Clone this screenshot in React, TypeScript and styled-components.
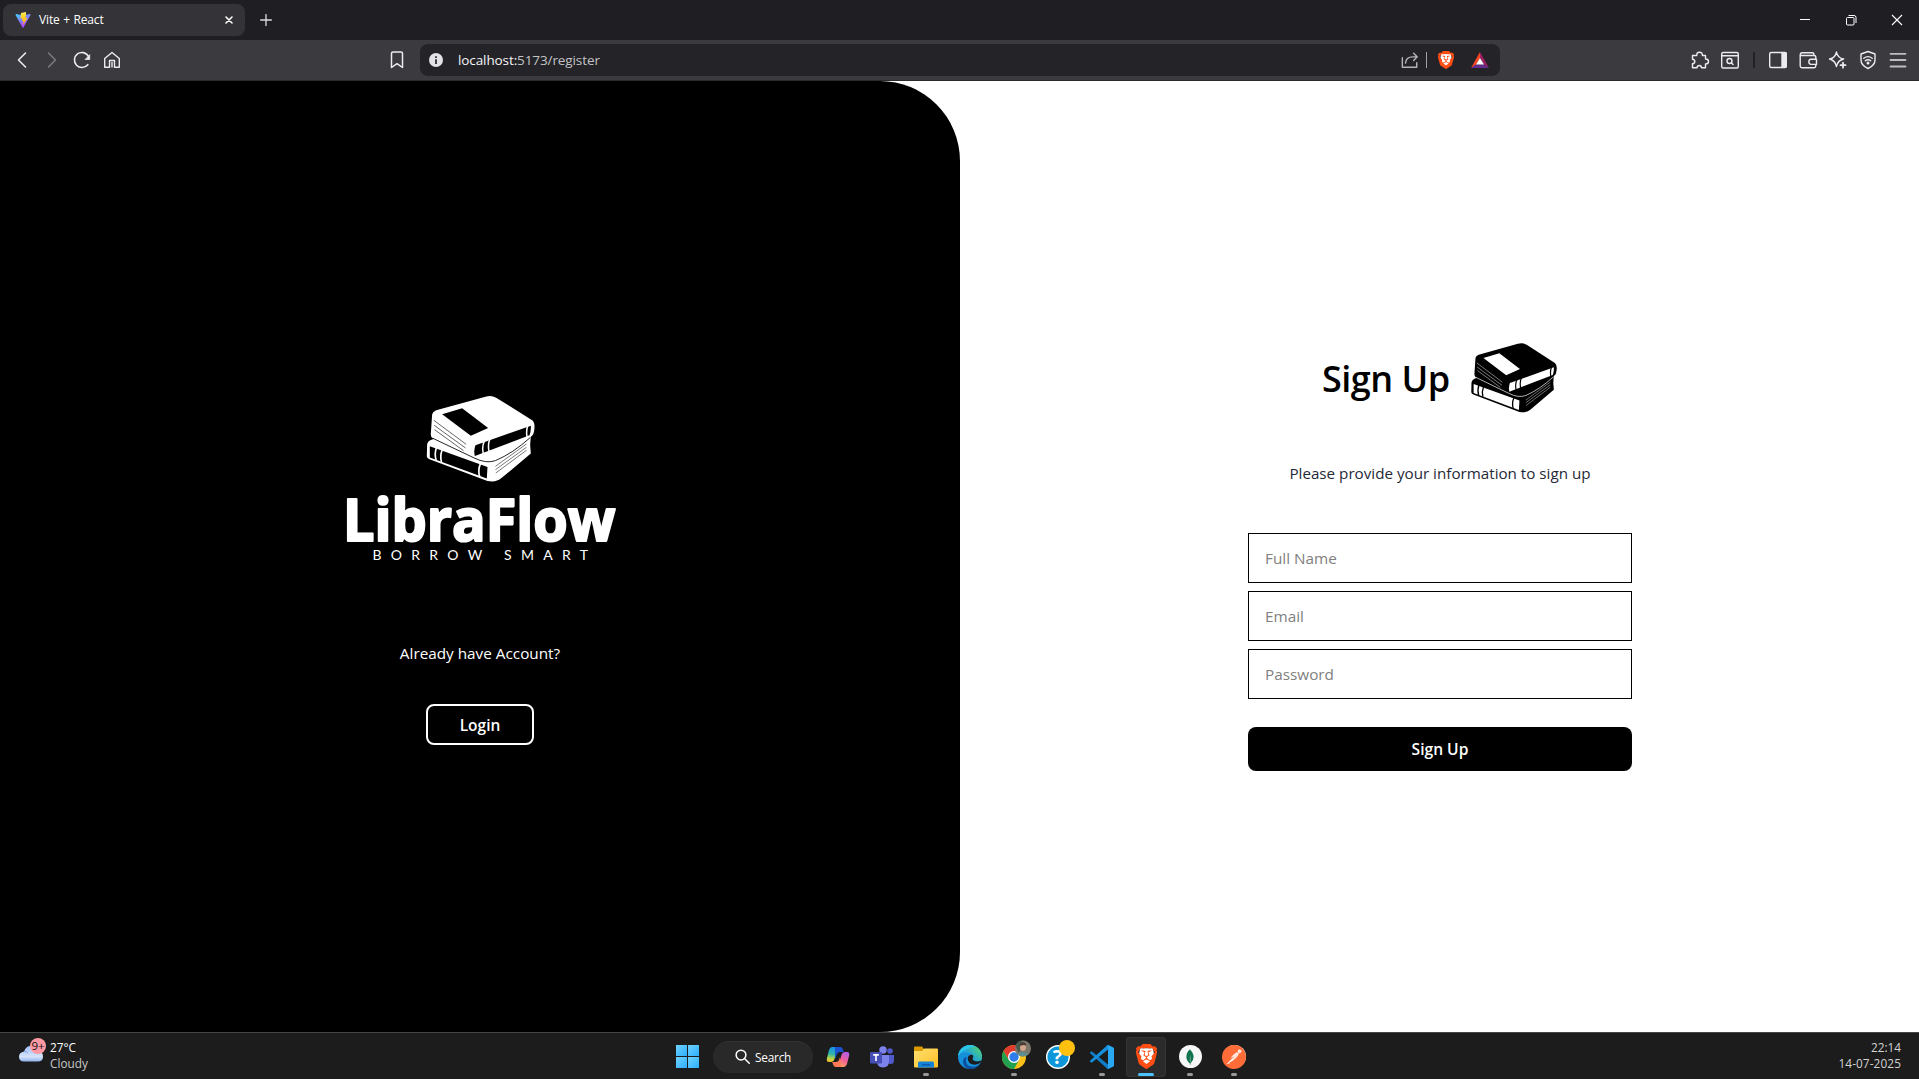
import React from 'react';
import styled, { createGlobalStyle } from 'styled-components';
import { SiBrave, SiMongodb, SiPostman } from 'react-icons/si';

const Global = createGlobalStyle`
  * { box-sizing: border-box; }
  html, body { margin: 0; padding: 0; overflow: hidden; }
  body { font-family: "Open Sans", "Noto Sans", sans-serif; background: #fff; }
  svg { display: block; flex: none; }
`;

const Screen = styled.div`
  display: flex;
  flex-direction: column;
  width: 1919px;
  height: 1079px;
`;

/* ---------- browser chrome ---------- */

const TabStrip = styled.header`
  display: flex;
  align-items: center;
  height: 40px;
  padding-left: 3px;
  background: #1f1e23;
  color: #fff;
`;

const Tab = styled.div`
  display: flex;
  align-items: center;
  width: 242px;
  height: 32px;
  padding: 0 10px 0 12px;
  border-radius: 8px;
  background: #343338;
`;

const TabTitle = styled.span`
  flex: 1;
  margin-left: 8px;
  font-size: 12px;
  font-weight: 500;
  letter-spacing: -0.15px;
  word-spacing: 0.6px;
  line-height: 16px;
`;

const NewTab = styled.div`
  margin-left: 15px;
`;

const WindowControls = styled.div`
  display: flex;
  align-items: center;
  gap: 34px;
  margin-left: auto;
  padding-right: 16px;
`;

const Toolbar = styled.nav`
  display: flex;
  align-items: center;
  height: 41px;
  padding: 0 11px 0 12px;
  border-bottom: 1px solid #2b2a2f;
  background: #3b3a3f;
  color: #ececef;
`;

const IconGroup = styled.div<{ $push?: string }>`
  display: flex;
  align-items: center;
  gap: 10px;
  margin-left: ${(p) => p.$push || '0'};
`;

const AddressBar = styled.div`
  display: flex;
  align-items: center;
  width: 1080px;
  height: 32px;
  margin-left: 13px;
  padding: 0 11px 0 8px;
  border-radius: 8px;
  background: #242328;
`;

const Url = styled.span`
  flex: 1;
  margin-left: 14px;
  font-size: 13.5px;
  letter-spacing: -0.1px;
  color: #c3c3c7;
  b { font-weight: 400; color: #f5f5f7; }
`;

const Divider = styled.i<{ $color: string; $margin: string; $w: number }>`
  width: ${(p) => p.$w}px;
  height: 16px;
  margin: ${(p) => p.$margin};
  background: ${(p) => p.$color};
`;

/* ---------- page ---------- */

const Page = styled.main`
  display: flex;
  height: 951px;
  background: #fff;
`;

const BrandPanel = styled.section`
  display: flex;
  flex-direction: column;
  align-items: center;
  width: 960px;
  padding-top: 310px;
  border-radius: 0 80px 80px 0;
  background: #000;
  color: #fff;
`;

const Prompt = styled.p`
  margin: 70px 0 0;
  font-size: 15.3px;
  line-height: 24px;
  letter-spacing: 0;
`;

const LoginButton = styled.button`
  width: 108px;
  height: 41px;
  margin-top: 39px;
  padding: 0;
  border: 2px solid #fff;
  border-radius: 8px;
  background: #000;
  color: #fff;
  font: 600 15.5px/24px "Open Sans", sans-serif;
`;

const FormPanel = styled.section`
  display: flex;
  flex: 1;
  flex-direction: column;
  align-items: center;
  padding: 262px 0 0 1px;
`;

const Heading = styled.div`
  display: flex;
  align-items: center;
  gap: 21px;
  height: 70px;
  width: 234px;
  h1 {
    width: 128px;
    margin: 2px 0 0 -1px;
    font-size: 36px;
    font-weight: 600;
    line-height: 40px;
    letter-spacing: -0.5px;
    white-space: nowrap;
    color: #000;
  }
`;

const Hint = styled.p`
  margin: 48px 0;
  font-size: 15.2px;
  line-height: 24px;
  color: #1f2937;
`;

const Form = styled.form`
  display: flex;
  flex-direction: column;
  gap: 8px;
  width: 384px;
`;

const Field = styled.input`
  height: 50px;
  padding: 0 16px;
  border: 1px solid #000;
  border-radius: 0;
  outline: none;
  background: #fff;
  font: 400 15.3px/24px "Open Sans", sans-serif;
  &::placeholder { color: #808080; opacity: 1; }
`;

const Submit = styled.button`
  height: 44px;
  margin-top: 20px;
  border: 0;
  border-radius: 8px;
  background: #000;
  color: #fff;
  font: 600 15.6px/24px "Open Sans", sans-serif;
`;

/* ---------- taskbar ---------- */

const Taskbar = styled.footer`
  display: grid;
  grid-template-columns: 1fr auto 1fr;
  height: 47px;
  border-top: 1px solid #454545;
  background: #1c1c1c;
  color: #fff;
  font-size: 11.8px;
  line-height: 16px;
`;

const Weather = styled.div`
  display: flex;
  gap: 6px;
  padding: 7px 0 0 18px;
  div { margin-top: -1px; }
  p { margin: 0; }
  p + p { color: #c8c8c8; }
`;

const Apps = styled.div`
  display: flex;
  align-items: center;
  padding: 1px 0 0 13px;
`;

const StartButton = styled.div`
  display: grid;
  grid-template: 11px 11px / 11px 11px;
  gap: 1px;
  margin-right: 14px;
  i { background: linear-gradient(135deg, #6fd2ff, #2daeff); }
`;

const SearchPill = styled.div`
  display: flex;
  align-items: center;
  gap: 5px;
  width: 100px;
  height: 32px;
  margin-right: 3px;
  padding: 0 0 1px 22px;
  border-radius: 16px;
  border-top: 1px solid #343434;
  background: #292929;
  letter-spacing: -0.2px;
`;

const AppSlot = styled.div<{ $active?: boolean }>`
  position: relative;
  display: flex;
  align-items: center;
  justify-content: center;
  width: 40px;
  height: 40px;
  margin: 0 2px;
  border-radius: 4px;
  background: ${(p) => (p.$active ? '#2b2b2b' : 'transparent')};
  box-shadow: ${(p) => (p.$active ? 'inset 0 0 0 1px #343434' : 'none')};
`;

const Indicator = styled.i<{ $active?: boolean }>`
  position: absolute;
  bottom: 1px;
  left: 50%;
  width: ${(p) => (p.$active ? 16 : 6)}px;
  height: 3px;
  border-radius: 2px;
  background: ${(p) => (p.$active ? '#4cc2ff' : '#9a9a9a')};
  transform: translateX(-50%);
`;

const Clock = styled.div`
  padding: 6px 18px 0 0;
  text-align: right;
  color: #d2d2d2;
  p { margin: 0; }
  p + p { letter-spacing: 0.1px; }
`;

const Disc = styled.span<{ $bg: string }>`
  display: flex;
  align-items: center;
  justify-content: center;
  width: 23px;
  height: 23px;
  border-radius: 50%;
  background: ${(p) => p.$bg};
`;

/* ---------- drawings ---------- */

const Line = ({ children, size = 20, w = 1.4, color = 'currentColor' }: { children: React.ReactNode; size?: number; w?: number; color?: string }) => (
  <svg width={size} height={size} viewBox="0 0 20 20" fill="none" stroke={color} strokeWidth={w} strokeLinecap="round" strokeLinejoin="round">
    {children}
  </svg>
);

const Books = ({ fg, bg }: { fg: string; bg: string }) => (
  <g>
    <path fill={fg} d="M322 258 323 222Q325 212 336 208L348 204 470 250 634 196 632 224 634 250 544 325Q530 337 504 332L330 267Q322 264 322 258Z" />
    <path fill={bg} d="M331 228 504 290 502 325 331 262Z" />
    <path fill="none" stroke={fg} strokeWidth="5" d="M351 232Q344 250 350 270M368 239Q361 256 366 275M483 280Q474 300 481 320" />
    <path fill="none" stroke={bg} strokeWidth="1.6" d="M528 288 621 221M528 298 621 231M529 308 621 240" />
    <path fill={fg} d="M334 190 338 132Q340 124 350 120L498 79Q516 74 530 82L638 150Q646 156 645 172 644 194 634 199L470 258Q460 262 448 253L340 204Q333 200 334 190Z" />
    <path fill="none" stroke={bg} strokeWidth="2.6" d="M340 204 464 263Q500 281 528 271 580 249 632 202" />
    <path fill={bg} d="M368 132 428 114 506 173 454 196Z" />
    <path fill={bg} d="M468 225 634 166Q635 182 630 195L466 257Q462 240 468 225Z" />
    <path fill="none" stroke={fg} strokeWidth="4.5" d="M495 211Q486 230 492 251M511 206Q504 225 509 245M625 166Q619 182 623 201" />
    <path fill="none" stroke={bg} strokeWidth="1.8" d="M343 150 440 222M344 165 438 233M345 178 432 241" />
  </g>
);

const BrandLogo = () => (
  <svg width="320" height="180" viewBox="-20 0 320 180" style={{ overflow: 'visible' }}>
    <g transform="translate(-20.5 -20.7) scale(.3333)">
      <Books fg="#fff" bg="#000" />
    </g>
    <text x="3" y="149.500" fill="#fff" stroke="#fff" strokeWidth="2.200" strokeLinejoin="round" fontFamily="Open Sans" fontWeight="700" fontSize="58.500" textLength="272.500" lengthAdjust="spacingAndGlyphs">LibraFlow</text>
    <text x="32.500" y="168.800" fill="#fff" fontFamily="Lato" fontSize="14" textLength="215.500" lengthAdjust="spacing">BORROW SMART</text>
  </svg>
);

const BraveMark = ({ w, h }: { w: number; h: number }) => (
  <svg width={w} height={h} viewBox="2 0 20 24" preserveAspectRatio="none">
    <path d="M6 4 18 4 19 9 16 18 12 21 8 18 5 9Z" fill="#fff" />
    <SiBrave x="0" y="0" size={24} color="#ff4d14" />
  </svg>
);

const Vite = () => (
  <svg width="16" height="16" viewBox="0 0 32 32">
    <defs>
      <linearGradient id="va" x1="0" y1="0" x2=".6" y2="1"><stop stopColor="#41d1ff" /><stop offset="1" stopColor="#bd34fe" /></linearGradient>
      <linearGradient id="vb" x1="0" y1="0" x2="0" y2="1"><stop stopColor="#ffea83" /><stop offset=".2" stopColor="#ffdd35" /><stop offset="1" stopColor="#ffa800" /></linearGradient>
    </defs>
    <path fill="url(#va)" d="M31 6 17 31Q16 32 15 31L1 6Q1 4 3 4L16 7 29 4Q32 4 31 6Z" />
    <path fill="url(#vb)" d="M22 0 12 2 11 13 15 13 14 18 17 18 16 26 25 12 21 12 22 6Z" />
  </svg>
);

const Bat = () => (
  <svg width="18" height="16" viewBox="0 0 18 16">
    <path fill="#ff4724" d="M9 0 0 16 5 12.5 9 6Z" />
    <path fill="#9e1f63" d="M9 0 18 16 13 12.5 9 6Z" />
    <path fill="#662d91" d="M0 16 5 12.5H13L18 16Z" />
    <path fill="#fff" d="M9 6 13 12.5H5Z" />
  </svg>
);

const Cloud = () => (
  <svg width="26" height="24" viewBox="0 0 26 24" style={{ overflow: 'visible' }}>
    <defs><linearGradient id="cl" x1="0" y1="0" x2="0" y2="1"><stop stopColor="#9fc0f5" /><stop offset=".7" stopColor="#d5e3fa" /><stop offset="1" stopColor="#8fb2ef" /></linearGradient></defs>
    <path fill="url(#cl)" d="M6 21.500Q1 21.500 1 16.500 1 12.500 6 11.500 8 5.500 14 5.500 20 5.500 21 11 25 12 25 16.500 25 21.500 20 21.500Z" />
    <path fill="none" stroke="#7fa6ea" d="M6 11.500Q9 11.500 10 13" />
    <circle cx="20" cy="6" r="8" fill="#ff99a4" />
    <text x="20" y="10.200" textAnchor="middle" fontSize="11.500" fill="#111">9+</text>
  </svg>
);

const Copilot = () => (
  <svg width="24" height="22" viewBox="0 0 24 22">
    <defs>
      <linearGradient id="ca" x1=".3" y1="0" x2=".2" y2="1"><stop stopColor="#1b8fe8" /><stop offset=".45" stopColor="#2fb5a6" /><stop offset=".8" stopColor="#c8d63b" /><stop offset="1" stopColor="#f5b52e" /></linearGradient>
      <linearGradient id="cb" x1=".7" y1="0" x2=".3" y2="1"><stop stopColor="#b45be8" /><stop offset=".5" stopColor="#f0609a" /><stop offset="1" stopColor="#ffa45c" /></linearGradient>
    </defs>
    <path fill="url(#ca)" d="M6 1H14Q12 2 11 5L8.500 13Q7.500 16 5 16H3Q0 16 1 12L3 4Q4 1 6 1Z" />
    <path fill="#1a52cf" d="M9 1H14Q16.500 1 17 4L17.800 6H14Q12 6 11 8L9 13Z" />
    <path fill="url(#cb)" d="M18 21H10Q12 20 13 17L15.500 9Q16.500 6 19 6H21Q24 6 23 10L21 18Q20 21 18 21Z" />
    <path fill="#ff7a55" d="M15 21H10Q7.500 21 7 18L6.200 16H10Q12 16 13 14L14 11Z" />
  </svg>
);

const Teams = () => (
  <svg width="24" height="22" viewBox="0 0 24 22">
    <circle cx="20" cy="5" r="2.800" fill="#5059c9" />
    <circle cx="13" cy="4" r="3.700" fill="#7b83eb" />
    <path fill="#5059c9" d="M17 9H24V14.500Q24 18 20.500 18 17 18 17 15Z" />
    <path fill="#7b83eb" d="M7 9H19V15Q19 21.500 13 21.500 7 21.500 7 15Z" />
    <rect x="0" y="6" width="12" height="11.500" rx="1.200" fill="#464eb8" />
    <path stroke="#fff" strokeWidth="1.600" d="M3.200 8.900H8.800M6 9V15" />
  </svg>
);

const Folder = () => (
  <svg width="24" height="22" viewBox="0 0 24 22">
    <defs><linearGradient id="fo" x1="0" y1="0" x2="1" y2="1"><stop stopColor="#ffdf72" /><stop offset="1" stopColor="#ffc022" /></linearGradient></defs>
    <path fill="#dd9a00" d="M0 1.500Q0 .5 1 .5H8L10 3V8H0Z" />
    <path fill="url(#fo)" d="M0 5H8L10.500 2.500H23Q24 2.500 24 3.500V20.500Q24 21.500 23 21.500H1Q0 21.500 0 20.500Z" />
    <path fill="#1483d8" d="M4 21.500V17Q4 15.500 5.500 15.500H18.500Q20 15.500 20 17V21.500Z" />
    <path fill="#0b5cad" d="M8 18H16V19.500H8Z" />
  </svg>
);

const Edge = () => (
  <svg width="24" height="24" viewBox="0 0 24 24">
    <defs><linearGradient id="ed" x1="0" y1="24" x2="24" y2="0" gradientUnits="userSpaceOnUse"><stop stopColor="#0b59a8" /><stop offset=".5" stopColor="#1c9ee0" /><stop offset="1" stopColor="#5fe05c" /></linearGradient></defs>
    <circle cx="12" cy="12" r="12" fill="#1790dc" />
    <path fill="url(#ed)" d="M0 12A12 12 0 0 1 24 12Q24 16.500 19.500 16.500 14.500 16.500 14.500 14 16 12 14.500 10 12 7 7 8 2 9 0 12Z" />
    <path fill="#2cc5e8" d="M0 11.500A12 12 0 0 1 18 1.600Q12 2 5.500 6 1 9 0 11.500Z" />
    <path fill="#0c4f9e" d="M8.500 12Q6 21 15 21.800 19 22 22 18.500 18 25 10.500 23.900 5 22 5 16.500 5.500 12 8.500 12Z" />
    <path fill="#1c1c1c" d="M14.500 9.700Q9.500 9.500 9.700 14 10.500 19.500 16.500 19.700 20.500 19.700 23 17 24 15.500 22 15.800 19.500 17 16.500 16 14 15 14.700 13.500 16.200 11.500 14.500 9.700Z" />
  </svg>
);

const Chrome = () => (
  <svg width="24" height="32" viewBox="0 0 24 32" style={{ overflow: 'visible' }}>
    <circle cx="12" cy="16" r="12" fill="#fbc116" />
    <path fill="#e33b2e" d="M1.600 10A12 12 0 0 1 22.400 10H12V16L6.800 19Z" />
    <path fill="#1fa150" d="M1.600 10A12 12 0 0 0 12 28L17.200 19 12 16 6.800 19Z" />
    <circle cx="12" cy="16" r="6" fill="#fff" />
    <circle cx="12" cy="16" r="4.700" fill="#2f7de9" />
    <circle cx="21" cy="7.500" r="8" fill="#7b776a" />
    <path fill="#48594f" d="M13.500 5A8 8 0 0 1 20 -.4L17 12Z" />
    <path fill="#5d8e91" d="M15 13Q20 9 26.500 13 21 18 15 13Z" />
    <ellipse cx="21" cy="6" rx="3" ry="4" fill="#d3a58a" />
    <path fill="#493b33" d="M18 5Q17.500 1 21 1.200 24.500 1 24 5 22.500 3 18 5Z" />
  </svg>
);

const Help = () => (
  <svg width="24" height="32" viewBox="0 0 24 32" style={{ overflow: 'visible' }}>
    <circle cx="12" cy="16" r="11.300" fill="#0d96d8" stroke="#fff" strokeWidth="1.400" />
    <text x="11.500" y="23.300" textAnchor="middle" fontSize="20" fontWeight="700" fill="#fff">?</text>
    <circle cx="21" cy="7" r="8" fill="#ffc010" />
  </svg>
);

const CodeEditor = () => (
  <svg width="24" height="24" viewBox="0 0 24 24">
    <path fill="#0f7dc9" d="M1.700 6.300 18 19.500V24L17 23.500 0 8.300Q-.3 7.700 .2 7.200Z" />
    <path fill="#1590dd" d="M1.700 17.700 18 4.500V0L17 .5 0 15.700Q-.3 16.300 .2 16.800Z" />
    <path fill="#2ba8f2" d="M17 .5Q17.800 -.2 18.700 .2L23 2.200Q24 2.700 24 3.700V20.300Q24 21.300 23 21.800L18.700 23.800Q17.800 24.200 17 23.500 18 23.800 18 22V2Q18 .2 17 .5Z" />
  </svg>
);

const apps: { icon: React.ReactNode; running?: boolean; active?: boolean }[] = [
  { icon: <Copilot /> },
  { icon: <Teams /> },
  { icon: <Folder />, running: true },
  { icon: <Edge /> },
  { icon: <Chrome />, running: true },
  { icon: <Help /> },
  { icon: <CodeEditor />, running: true },
  { icon: <BraveMark w={21} h={25} />, running: true, active: true },
  { icon: <Disc $bg="#f7f7f7"><SiMongodb size={16} color="#11734d" /></Disc>, running: true },
  { icon: <Disc $bg="#fff"><SiPostman size={24} color="#ff6c37" /></Disc>, running: true },
];

export default function App() {
  return (
    <Screen>
      <Global />
      <TabStrip>
        <Tab>
          <Vite />
          <TabTitle>Vite + React</TabTitle>
          <Line size={12} w={2.6}><path d="M5 5 15 15M15 5 5 15" /></Line>
        </Tab>
        <NewTab><Line size={12} w={2.2} color="#dcdce0"><path d="M10 1V19M1 10H19" /></Line></NewTab>
        <WindowControls>
          <svg width="12" height="12" viewBox="0 0 12 12"><path stroke="#fff" d="M1 5.500H11" /></svg>
          <svg width="12" height="12" viewBox="0 0 12 12" fill="none" stroke="#fff"><rect x="1.500" y="3.500" width="7.500" height="7.500" rx="1" /><path d="M3.500 1.500H9Q11 1.500 11 3.500V9" /></svg>
          <svg width="12" height="12" viewBox="0 0 12 12"><path stroke="#fff" strokeWidth="1.100" d="M1 1 11 11M11 1 1 11" /></svg>
        </WindowControls>
      </TabStrip>

      <Toolbar>
        <IconGroup>
          <Line w={1.6}><path d="M13.500 3 6.500 10 13.500 17" /></Line>
          <Line w={1.6} color="#7b7a7f"><path d="M6.500 3 13.500 10 6.500 17" /></Line>
          <Line w={1.6}><path d="M16.500 6.300A7.500 7.500 0 1 0 15.800 14.700" /><path fill="currentColor" d="M17.700 5V9.500H13.500Z" strokeWidth=".8" /></Line>
          <Line><path d="M2.700 8.500 10 2.500 17.300 8.500V17.300H12.500V10.500H7.500V17.300H2.700ZM10 12.500V17" /></Line>
        </IconGroup>
        <IconGroup $push="265px">
          <Line w={1.5}><path d="M4.500 3.500Q4.500 2 6 2H14Q15.500 2 15.500 3.500V17.500L10 13.700 4.500 17.500Z" /></Line>
        </IconGroup>
        <AddressBar>
          <svg width="16" height="16" viewBox="0 0 16 16"><circle cx="8" cy="8" r="7" fill="#e3e3e7" /><path stroke="#242328" strokeWidth="1.700" d="M8 7.200V12M8 4.200V5.900" /></svg>
          <Url><b>localhost:</b>5173/register</Url>
          <Line size={18} color="#b4b4b8" w={1.6}><path d="M1.500 7.500V18H17.500V13M5 13.500Q5.500 6.500 13 6.500H17.500M14 2.500 18 6.500 14 10.500" /></Line>
          <Divider $w={1} $color="#a0a0a4" $margin="0 11px 0 7px" />
          <BraveMark w={16} h={18} />
          <Divider $w={0} $color="transparent" $margin="0 0 0 17px" />
          <Bat />
        </AddressBar>
        <IconGroup $push="auto">
          <Line><path d="M2.500 5.500H6.800Q6.500 2.200 9.500 2.200T12.400 5.500H15.500V9Q18.500 9 18.500 11.500T15.500 14V17.800H11.500Q11.500 15.500 9.300 15.500T7 17.800H2.500V13.800Q4.800 13.500 4.800 11.500T2.500 9.200Z" /></Line>
          <Line><rect x="1.700" y="2.500" width="16.600" height="15.500" rx="1.500" /><path d="M2 5.700H18" /><circle cx="9.500" cy="11" r="2.500" /><path d="M11.500 13 13 14.500" /></Line>
          <Divider $w={2} $color="#222126" $margin="0 3px" />
          <Line><rect x="1.700" y="2.500" width="16.600" height="15" rx="1.500" /><path fill="currentColor" d="M14 3H18V17H14Z" /></Line>
          <Line><path d="M17.800 9.500V7Q17.800 5.500 16 5.500H2.200V16Q2.200 17.700 4 17.700H16Q17.800 17.700 17.800 16V14.200M2.200 5.500Q2.200 2.800 4 2.800H14.500Q16 2.800 16 5.200M18.500 9.200H13Q10.800 9.500 10.800 11.800T13 14.400H18.500Z" /></Line>
          <Line><path d="M8.500 2Q9.500 8 15.700 9 9.500 10.500 8.500 16.500 7.300 10.500 1.500 9 7.300 8 8.500 2Z" /><path strokeWidth="1.800" d="M15 12.700V17.700M12.500 15.200H17.500" /></Line>
          <Line><path d="M10 1.500 17 4V10Q17 15.500 10 18.500 3 15.500 3 10V4ZM5.800 8.300Q10 5 14.200 8.300M7.300 10.800Q10 8.700 12.700 10.800" /><circle cx="10" cy="13" r=".8" fill="currentColor" /></Line>
          <Line w={1.8} color="#bdbdc1"><path d="M2.500 3.800H17.500M2.500 10H17.500M2.500 16.500H17.500" /></Line>
        </IconGroup>
      </Toolbar>

      <Page>
        <BrandPanel>
          <BrandLogo />
          <Prompt>Already have Account?</Prompt>
          <LoginButton>Login</LoginButton>
        </BrandPanel>
        <FormPanel>
          <Heading>
            <h1>Sign Up</h1>
            <svg width="86" height="70" viewBox="321 76 325 260" preserveAspectRatio="none">
              <Books fg="#000" bg="#fff" />
            </svg>
          </Heading>
          <Hint>Please provide your information to sign up</Hint>
          <Form onSubmit={(e) => e.preventDefault()}>
            <Field placeholder="Full Name" />
            <Field placeholder="Email" />
            <Field placeholder="Password" type="password" />
            <Submit>Sign Up</Submit>
          </Form>
        </FormPanel>
      </Page>

      <Taskbar>
        <Weather>
          <Cloud />
          <div><p>27°C</p><p>Cloudy</p></div>
        </Weather>
        <Apps>
          <StartButton><i /><i /><i /><i /></StartButton>
          <SearchPill>
            <Line size={15} w={2}><circle cx="8" cy="8" r="6.500" /><path d="M13 13 19 19" /></Line>
            Search
          </SearchPill>
          {apps.map((app, i) => (
            <AppSlot key={i} $active={app.active}>
              {app.icon}
              {app.running && <Indicator $active={app.active} />}
            </AppSlot>
          ))}
        </Apps>
        <Clock>
          <p>22:14</p>
          <p>14-07-2025</p>
        </Clock>
      </Taskbar>
    </Screen>
  );
}
